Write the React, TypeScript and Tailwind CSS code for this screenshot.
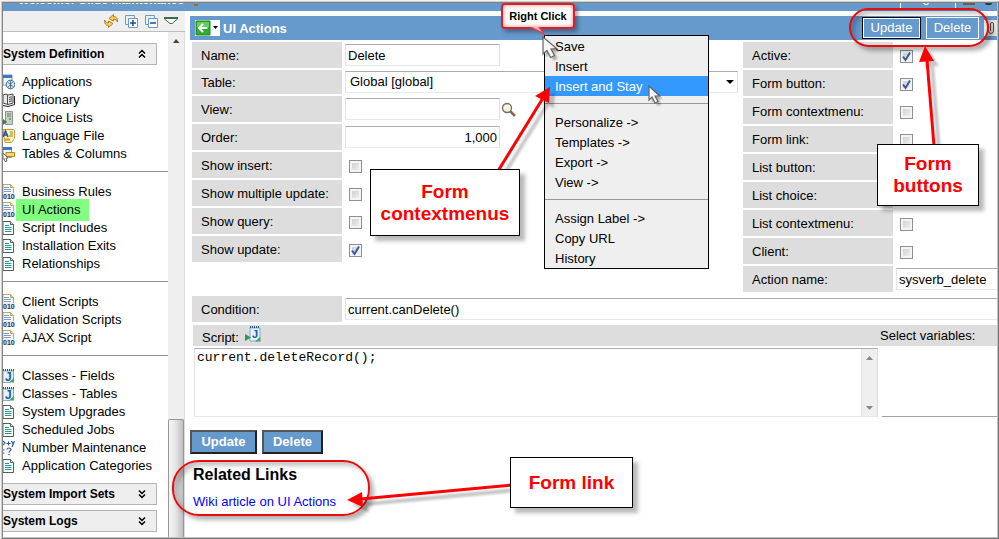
import type { ReactNode } from "react";

type IconKind =
  | "app" | "book" | "server" | "language" | "columns"
  | "code" | "page" | "class" | "number";

function ItemIcon({ kind }: { kind: IconKind }) {
  return (
    <svg viewBox="0 0 12 16" className="h-4 w-3 shrink-0" aria-hidden="true">
      {kind === "app" && (
        <g>
          <path d="M0 1h9v10H0z" fill="#f4f8fc" stroke="#7f9cc0" />
          <path d="M0 1h9v3H0z" fill="#3f78bd" />
          <circle cx="7.5" cy="10.5" r="4.3" fill="#dce8f2" stroke="#41668c" />
          <path d="M4.5 8l6 5M10 7.5l-5 6M7.5 6.500v8" stroke="#41668c" strokeWidth=".9" />
        </g>
      )}
      {kind === "book" && (
        <g>
          <path d="M0 3l3-1 2 1 5-1v9l-5 1.500-5-1.500z" fill="#e8e8e8" stroke="#4c4c4c" />
          <path d="M4.500 3v10M6 5.500l3-.6M6 7.500l3-.6M6 9.500l3-.6" stroke="#4c4c4c" />
          <path d="M11.500 4v8.500L5 14.500l-5-1" fill="none" stroke="#222" />
        </g>
      )}
      {kind === "server" && (
        <g>
          <path d="M2.500 1.500h7v13h-7z" fill="#c9cec9" stroke="#8c948c" />
          <path d="M4 4h4M4 6h4" stroke="#6c7a6c" />
          <circle cx="7" cy="9" r="1" fill="#31b04a" />
          <path d="M0 9l4 3-4 3z" fill="#238a43" />
        </g>
      )}
      {kind === "language" && (
        <g>
          <path d="M0 1.500h10.500l1 1v8l-3 4H2z" fill="#fff3b5" stroke="#c79a2b" />
          <path d="M7 4h3M7 6h3M6 8h4" stroke="#9a8240" />
          <path d="M0 9l2.500-6L5 9M1 7h3" fill="none" stroke="#23549c" strokeWidth="1.600" />
          <path d="M2 11.500h5" stroke="#c79a2b" strokeWidth="2" />
        </g>
      )}
      {kind === "columns" && (
        <g>
          <path d="M0 1.500h8.500v10H0z" fill="#eef4fb" stroke="#7f9cc0" />
          <path d="M0 1h9v3H0z" fill="#3f78bd" />
          <path d="M3 6.500h8.500v4H3z" fill="#f8d777" stroke="#b98718" />
          <path d="M0 7l5 5H3l1 3-2 .5-1-3-1 1z" fill="#fff" stroke="#666" />
        </g>
      )}
      {kind === "code" && (
        <g>
          <path d="M0 .5h7.500l3 3v8H0z" fill="#fff" stroke="#bda46a" />
          <path d="M7.500.5v3h3" fill="#e9cf8d" stroke="#bda46a" />
          <path d="M1 3.500h5M1 5.500h7M1 7.500h7" stroke="#7b9bcb" />
          <path d="M0 9h12v6H0z" fill="#e4e9f2" />
          <text x="0" y="15" fontSize="7" fontWeight="700" fontFamily="Liberation Sans, sans-serif" fill="#1d3768">010</text>
        </g>
      )}
      {kind === "page" && (
        <g>
          <path d="M0 1.500h7.500l3 3v10H0z" fill="#fff" stroke="#4f5f54" />
          <path d="M7.500 1.500v3h3" fill="#ddd" stroke="#4f5f54" />
          <path d="M2 5.500h4M2 7.500h6.500M2 9.500h6.500M2 11.500h6.500" stroke="#1f9a92" />
        </g>
      )}
      {kind === "class" && (
        <g>
          <path d="M0 3h10.500v8L7 14.500H0z" fill="#e3f1fa" stroke="#86a9c6" />
          <path d="M0 2h11" stroke="#27568c" strokeWidth="2" strokeDasharray="1 1" />
          <path d="M11 10v4.500H6z" fill="#3fa565" />
          <text x="2" y="12.500" fontSize="12" fontWeight="700" fontFamily="Liberation Sans, sans-serif" fill="#1d5fa8">J</text>
        </g>
      )}
      {kind === "number" && (
        <g fill="none" stroke="#2f5b95" strokeWidth="1.200">
          <path d="M0 1l2 2-2 2M3.500 3.500h4M5.500 1.500v4M8.500 1l1.500 3M11.500 1L9 7" />
          <path d="M0 10h1.500M0 13h1.500" />
          <path d="M4 9.500c0-2 4-2 4 0 0 1.500-2 1.500-2 3M6 14v1.300" />
        </g>
      )}
    </svg>
  );
}

const groups: { label: string; icon: IconKind }[][] = [
  [
    { label: "Applications", icon: "app" },
    { label: "Dictionary", icon: "book" },
    { label: "Choice Lists", icon: "server" },
    { label: "Language File", icon: "language" },
    { label: "Tables & Columns", icon: "columns" },
  ],
  [
    { label: "Business Rules", icon: "code" },
    { label: "UI Actions", icon: "code" },
    { label: "Script Includes", icon: "page" },
    { label: "Installation Exits", icon: "page" },
    { label: "Relationships", icon: "page" },
  ],
  [
    { label: "Client Scripts", icon: "code" },
    { label: "Validation Scripts", icon: "code" },
    { label: "AJAX Script", icon: "code" },
  ],
  [
    { label: "Classes - Fields", icon: "class" },
    { label: "Classes - Tables", icon: "class" },
    { label: "System Upgrades", icon: "page" },
    { label: "Scheduled Jobs", icon: "page" },
    { label: "Number Maintenance", icon: "number" },
    { label: "Application Categories", icon: "page" },
  ],
];

function SectionHeader({ title, open }: { title: string; open?: boolean }) {
  return (
    <button
      type="button"
      aria-expanded={!!open}
      className="mr-[11px] flex h-[22px] shrink-0 items-center justify-between border border-l-0 border-[#b4b4b4] bg-[#eeeeee] pr-[10px] text-left text-[12px] font-bold"
    >
      {title}
      <svg viewBox="0 0 8 10" className="h-[10px] w-2" fill="none" stroke="#000" strokeWidth="1.500" aria-hidden="true">
        {open ? <path d="M1 4.500l3-3 3 3M1 8.500l3-3 3 3" /> : <path d="M1 1.500l3 3 3-3M1 5.500l3 3 3-3" />}
      </svg>
    </button>
  );
}

function Sidebar() {
  return (
    <aside className="flex w-[182px] shrink-0 flex-col">
      <div className="flex h-[21px] items-center justify-end border-b border-[#bdbdbd] bg-[#efefef] pr-[7px]">
        <button type="button" aria-label="Refresh" className="mr-[7px]">
          <svg viewBox="0 0 14 14" className="h-[14px] w-[14px]" fill="#f8cf62" stroke="#ae7415" strokeWidth=".9">
            <path d="M5 4.500L9.500.500V2.500c3 0 4 2 4 5.500l-2-2.500-2-.5V7z" />
            <path d="M9 9.500l-4.500 4V11.500c-3 0-4-2-4-5.500l2 2.500 2 .5V7z" />
          </svg>
        </button>
        <button type="button" aria-label="Expand all" className="mr-[7px]">
          <svg viewBox="0 0 13 13" className="h-[13px] w-[13px]" fill="#e8f2fc" stroke="#6c9ac8">
            <path d="M.5.5h9v9h-9z" />
            <path d="M3.500 3.500h9v9h-9z" fill="#fff" />
            <path d="M5 8h6M8 5v6" stroke="#174f91" strokeWidth="1.500" />
          </svg>
        </button>
        <button type="button" aria-label="Collapse all" className="mr-[6px]">
          <svg viewBox="0 0 13 13" className="h-[13px] w-[13px]" fill="#e8f2fc" stroke="#6c9ac8">
            <path d="M.5.5h9v9h-9z" />
            <path d="M3.500 3.500h9v9h-9z" fill="#fff" />
            <path d="M5 8h6" stroke="#174f91" strokeWidth="1.500" />
          </svg>
        </button>
        <button type="button" aria-label="Options">
          <svg viewBox="0 0 14 8" className="h-2 w-[14px]" fill="#fff" stroke="#3d6b4d">
            <path d="M.5 1h13v1L8 6.500H6L.5 2z" />
            <path d="M0 1h14" strokeWidth="2" />
          </svg>
        </button>
      </div>
      <div className="flex flex-1">
        <nav className="flex min-w-0 flex-1 flex-col pt-[11px]">
          <SectionHeader title="System Definition" open />
          <div className="py-2">
            {groups.map((group, i) => (
              <div key={i}>
                {i > 0 && <div className="mt-2 mb-[11px] h-px bg-[#8f8f8f]" />}
                <ul>
                  {group.map((item) => (
                    <li key={item.label} className="flex h-[18px] items-center gap-px">
                      <ItemIcon kind={item.icon} />
                      <a
                        href="#"
                        className={
                          item.label === "UI Actions"
                            ? "bg-[#80ff80] py-[1px] pr-2 pl-[6px] leading-5"
                            : "pl-[6px] leading-[18px]"
                        }
                      >
                        {item.label}
                      </a>
                    </li>
                  ))}
                </ul>
              </div>
            ))}
          </div>
          <SectionHeader title="System Import Sets" />
          <div className="h-[5px]" />
          <SectionHeader title="System Logs" />
        </nav>
        <div className="flex w-[17px] flex-col border-r border-[#dcdcdc] bg-[#efefef]">
          <svg viewBox="0 0 16 16" className="h-4 w-4" aria-hidden="true">
            <path d="M5 11l3-4 3.500 4z" fill="#444" />
          </svg>
          <div className="mt-auto h-[118px] rounded-t-[2px] border border-b-0 border-[#979797] bg-linear-to-r from-[#f5f5f5] via-[#e4e4e6] to-[#bfbfc3]" />
        </div>
      </div>
    </aside>
  );
}

const fieldBox =
  "border border-t-[#abadb3] border-r-[#dbdfe6] border-b-[#e3e9ef] border-l-[#e2e3ea] bg-white text-[13px]";

function Row({ id, label, short, children }: { id: string; label: string; short?: boolean; children: ReactNode }) {
  return (
    <div className={short ? "flex h-[24px] gap-[3px]" : "flex h-[26px] gap-[3px]"}>
      <label htmlFor={id} className="flex w-[150px] shrink-0 items-center bg-[#dddddd] pt-[2px] pl-[9px]">
        {label}
      </label>
      <div className="flex min-w-0 flex-1 items-center">{children}</div>
    </div>
  );
}

function CheckRow({ id, label, checked }: { id: string; label: string; checked?: boolean }) {
  return (
    <Row id={id} label={label}>
      <span className="ml-1 grid pt-[3px]">
        <input
          id={id}
          type="checkbox"
          defaultChecked={checked}
          className="peer h-[13px] w-[13px] appearance-none border border-[#8e8f8f] bg-linear-to-br from-[#c3c8d2] to-[#f8f8f8] shadow-[inset_0_0_0_2px_#f4f4f4] [grid-area:1/1]"
        />
        <svg
          viewBox="0 0 13 13"
          className="pointer-events-none invisible h-[13px] w-[13px] peer-checked:visible [grid-area:1/1]"
          fill="none"
          stroke="#3c5a9a"
          strokeWidth="2"
          aria-hidden="true"
        >
          <path d="M3 6.500l2.500 3.500L10 2.500" />
        </svg>
      </span>
    </Row>
  );
}

function HeaderBar() {
  return (
    <div className="ml-[5px] flex h-6 items-center bg-[#6699cc]">
      <button type="button" aria-label="Back" className="ml-[5px] flex h-4 w-[25px] items-center bg-white">
        <svg viewBox="0 0 25 16" className="h-4 w-[25px]">
          <path d="M1 1h14v14H1z" fill="#2fae33" stroke="#178a20" />
          <path d="M2 2h12v5H2z" fill="#66cf5c" />
          <path d="M12.500 8H4.500M8 4L4 8l4 4" fill="none" stroke="#fff" strokeWidth="2" />
          <path d="M18 6h5l-2.500 3z" fill="#000" />
        </svg>
      </button>
      <h1 className="ml-[3px] flex-1 pt-[2px] text-[13px] font-bold text-white">UI Actions</h1>
      <button type="button" className="mr-[5px] h-[22px] w-[59px] border border-black text-white">
        <span className="flex h-full items-center justify-center border border-white">Update</span>
      </button>
      <button type="button" className="mr-[5px] h-[22px] w-[53px] border border-white text-white">Delete</button>
      <button type="button" aria-label="Attachments" className="h-4 w-[13px] bg-[#e4e4e0]">
        <svg viewBox="0 0 13 16" className="h-4 w-[13px]" fill="none" stroke="#555">
          <path d="M4.500 4v7a2.500 2.500 0 005 0V4a1.500 1.500 0 00-3 0v7" />
        </svg>
      </button>
    </div>
  );
}

function FormFields() {
  return (
    <div className="mt-[2px] ml-[7px] flex">
      <div className="flex min-w-0 flex-1 flex-col gap-[2px] pr-[5px]">
        <Row id="name" label="Name:">
          <input id="name" defaultValue="Delete" className={`h-[22px] w-[155px] px-[2px] ${fieldBox}`} />
        </Row>
        <Row id="table" label="Table:" short>
          <div className="grid flex-1 items-center">
            <select id="table" className={`h-[22px] w-full appearance-none pl-1 [grid-area:1/1] ${fieldBox}`}>
              <option>Global [global]</option>
            </select>
            <svg viewBox="0 0 8 4" className="pointer-events-none mr-1 h-1 w-2 justify-self-end [grid-area:1/1]" aria-hidden="true">
              <path d="M0 0h8L4 4z" />
            </svg>
          </div>
        </Row>
        <Row id="view" label="View:">
          <input id="view" className={`h-[22px] w-[155px] px-[2px] ${fieldBox}`} />
          <button type="button" aria-label="Look up view" className="ml-px">
            <svg viewBox="0 0 15 15" className="h-[15px] w-[15px]">
              <path d="M9 9l5 5" stroke="#8a6a4c" strokeWidth="2.500" />
              <circle cx="6" cy="6" r="4.500" fill="#f7f5dc" stroke="#6d6d60" strokeWidth="1.300" />
            </svg>
          </button>
        </Row>
        <Row id="order" label="Order:">
          <input id="order" defaultValue="1,000" className={`h-[22px] w-[155px] px-[2px] text-right ${fieldBox}`} />
        </Row>
        <CheckRow id="show-insert" label="Show insert:" />
        <CheckRow id="show-multiple" label="Show multiple update:" />
        <CheckRow id="show-query" label="Show query:" />
        <CheckRow id="show-update" label="Show update:" checked />
      </div>
      <div className="flex w-[254px] shrink-0 flex-col gap-[2px]">
        <CheckRow id="active" label="Active:" checked />
        <CheckRow id="form-button" label="Form button:" checked />
        <CheckRow id="form-contextmenu" label="Form contextmenu:" />
        <CheckRow id="form-link" label="Form link:" />
        <CheckRow id="list-button" label="List button:" />
        <CheckRow id="list-choice" label="List choice:" />
        <CheckRow id="list-contextmenu" label="List contextmenu:" />
        <CheckRow id="client" label="Client:" />
        <Row id="action-name" label="Action name:">
          <input id="action-name" defaultValue="sysverb_delete" className={`h-[22px] w-full border-r-0 px-[2px] ${fieldBox}`} />
        </Row>
      </div>
    </div>
  );
}

function ScriptEditor() {
  return (
    <>
      <div className="mt-[3px] ml-2 flex h-[21px] bg-[#dddddd]">
        <div className="flex flex-1 gap-[6px] pl-[9px]">
          <label htmlFor="script" className="pt-[3px] leading-[19px]">Script:</label>
          <svg viewBox="0 0 16 16" className="mt-px h-4 w-4" aria-hidden="true">
            <path d="M5 2h10v9l-3 4H5z" fill="#e3f1fa" stroke="#86a9c6" />
            <path d="M5 1h10" stroke="#27568c" strokeWidth="2" strokeDasharray="1 1" />
            <path d="M15.500 11v4.500H10z" fill="#3fa565" />
            <text x="7" y="12" fontSize="11" fontWeight="700" fontFamily="Liberation Sans, sans-serif" fill="#1d5fa8">J</text>
            <path d="M0 8l6 3.500L0 15z" fill="#2c9a55" />
          </svg>
        </div>
        <div className="w-[117px] pt-px leading-[19px]">Select variables:</div>
      </div>
      <div className="mt-[2px] ml-[9px] flex h-[69px]">
        <div className={`flex flex-1 ${fieldBox}`}>
          <textarea
            id="script"
            spellCheck={false}
            defaultValue="current.deleteRecord();"
            className="min-w-0 flex-1 resize-none overflow-hidden px-[2px] font-['Liberation_Mono',monospace] text-[13px] leading-[18px]"
          />
          <div className="flex w-4 flex-col justify-between border-l border-[#e2e2e2] bg-[#efefef]" aria-hidden="true">
            <svg viewBox="0 0 16 16" className="h-4 w-4"><path d="M4 11l3.500-4 3.500 4z" fill="#888" /></svg>
            <svg viewBox="0 0 16 16" className="h-4 w-4"><path d="M4 6l3.500 4L11 6z" fill="#888" /></svg>
          </div>
        </div>
        <div className="ml-[4px] w-[115px] border-b border-[#a0a0a0]" />
      </div>
    </>
  );
}

const bottomButton =
  "h-[24px] border-2 border-t-[#555] border-r-[#222] border-b-[#222] border-l-[#555] bg-[#6699cc] font-bold text-white";

const menuGroups = [
  ["Save", "Insert", "Insert and Stay"],
  ["Personalize ->", "Templates ->", "Export ->", "View ->"],
  ["Assign Label ->", "Copy URL", "History"],
];

function ContextMenu() {
  return (
    <div role="menu" className="absolute top-[35px] left-[544px] w-[165px] border border-black bg-[#efefef]">
      {menuGroups.map((group, i) => (
        <div key={i}>
          {i > 0 && <div className="mt-[7px] mb-2 h-px bg-[#999999]" />}
          {group.map((item) => (
            <button
              key={item}
              type="button"
              role="menuitem"
              className={
                item === "Insert and Stay"
                  ? "block h-5 w-full bg-[#3399ff] pt-[2px] pl-[10px] text-left leading-[18px] text-white"
                  : "block h-5 w-full pt-[2px] pl-[10px] text-left leading-[18px]"
              }
            >
              {item}
            </button>
          ))}
        </div>
      ))}
    </div>
  );
}

const callout =
  "absolute flex items-center justify-center border border-black bg-white text-center text-[19px] leading-[22px] font-bold text-[#ff0000] shadow-[5px_5px_4px_rgba(0,0,0,0.28)]";

const ring = "pointer-events-none absolute border-2 border-[#e80c0c] shadow-[4px_4px_4px_rgba(0,0,0,0.3),inset_4px_4px_4px_rgba(0,0,0,0.22)]";

function Arrow({ line, head }: { line: string; head: string }) {
  return (
    <g>
      <g transform="translate(5 5)" opacity=".22" className="blur-[1px]">
        <path d={line} stroke="#000" strokeWidth="4" />
        <path d={head} fill="#000" />
      </g>
      <path d={line} stroke="#ff0000" strokeWidth="3" />
      <path d={head} fill="#ff0000" />
    </g>
  );
}

function Pointer({ x, y, shape }: { x: number; y: number; shape: string }) {
  return (
    <g transform={`translate(${x} ${y})`}>
      <path d={shape} transform="translate(3 3)" fill="#000" opacity=".3" className="blur-[1px]" />
      <path d={shape} fill="#f6f6f6" stroke="#666" strokeWidth="1.200" />
    </g>
  );
}

function Annotations() {
  return (
    <>
      <ContextMenu />
      <div className={`${ring} top-[460px] left-[172px] h-[56px] w-[198px] rounded-[27px]`} />
      <div className={`${ring} top-[8px] right-[10px] h-[39px] w-[140px] rounded-[20px]`} />
      <svg viewBox="0 0 720 539" className="pointer-events-none absolute top-0 left-0 h-[539px] w-[720px]" aria-hidden="true">
        <Arrow line="M498 171L543 98" head="M550 87L535 96L549 103z" />
        <Arrow line="M512 485L361 499" head="M347 500L362 492L363 507z" />
        <Pointer x={543} y={37} shape="M0 0v17l4-3.500 3.500 7 4-2-3.500-6.500 5.500-.500z" />
        <Pointer x={649} y={86} shape="M0 0v14l3-3 3 6 3-1.500-3-5.500h4.500z" />
      </svg>
      <svg viewBox="0 0 120 160" className="pointer-events-none absolute top-0 right-0 h-[160px] w-[120px]" aria-hidden="true">
        <Arrow line="M55 146L48 60" head="M46 46L40 62L55 61z" />
      </svg>
      <div className={`${callout} top-[169px] left-[370px] h-[67px] w-[150px]`}>
        Form
        <br />
        contextmenus
      </div>
      <div className={`${callout} top-[144px] right-[20px] h-[62px] w-[102px]`}>
        Form
        <br />
        buttons
      </div>
      <div className={`${callout} top-[457px] left-[510px] h-[51px] w-[123px]`}>Form link</div>
      <div className="absolute top-[3px] left-[501px] flex h-[26px] w-[74px] items-center justify-center rounded-[4px] border-2 border-[#d8202c] bg-white text-[11px] font-bold shadow-[3px_3px_4px_rgba(0,0,0,0.35),inset_0_0_4px_#f08080]">
        Right Click
        <svg viewBox="0 0 18 10" className="absolute top-[22px] left-[26px] h-[10px] w-[18px]" aria-hidden="true">
          <path d="M0 0h11l6 9z" fill="#e0404a" />
          <path d="M3 0h6l4 5z" fill="#f6b0b0" />
        </svg>
      </div>
    </>
  );
}

export default function App() {
  return (
    <div className="relative flex min-h-screen flex-col overflow-hidden bg-[#f4f4f2] pt-px pl-px font-['Liberation_Sans',Arial,sans-serif] text-[13px] text-black">
      <div className="flex flex-1 flex-col border border-t-[#d0d0c6] border-r-[#777] border-b-[#777] border-l-[#d0d0cc]">
        <div className="flex flex-1 flex-col border border-t-[#84847c] border-r-[#c0c0c0] border-b-[#c0c0c0] border-l-[#848484] bg-white">
          <header className="flex h-2 items-start overflow-hidden bg-[#6699cc] text-white">
            <div className="flex h-[3px] flex-1 items-end overflow-hidden">
              <span className="pl-[15px] text-[12px] leading-[11px] font-bold">Welcome: Glide Maintenance</span>
              <span className="ml-[10px] h-[2px] w-1 bg-[#a06a30]" />
            </div>
            <button type="button" className="flex h-[6px] w-14 items-end justify-center overflow-hidden border border-t-0 border-white leading-5">
              Logout
            </button>
            <span className="ml-[7px] h-[2px] w-3 bg-[#6b5a48]" />
            <span className="mr-[5px] ml-[10px] h-[2px] w-[7px] rounded-b bg-[#2c3440]" />
          </header>
          <div className="flex flex-1">
            <Sidebar />
            <main className="min-w-0 flex-1 pt-[5px]">
              <HeaderBar />
              <FormFields />
              <div className="mt-1 ml-[7px]">
                <Row id="condition" label="Condition:">
                  <input id="condition" defaultValue="current.canDelete()" className={`h-[22px] w-full border-r-0 px-[2px] ${fieldBox}`} />
                </Row>
              </div>
              <ScriptEditor />
              <div className="mt-[13px] ml-[5px] flex gap-[5px]">
                <button type="button" className={`w-[67px] ${bottomButton}`}>Update</button>
                <button type="button" className={`w-[61px] ${bottomButton}`}>Delete</button>
              </div>
              <h2 className="mt-[11px] ml-2 text-[16px] leading-5 font-bold">Related Links</h2>
              <a href="#" className="mt-2 ml-2 inline-block leading-[18px] text-[#0000ff]">Wiki article on UI Actions</a>
            </main>
          </div>
        </div>
      </div>
      <Annotations />
    </div>
  );
}
